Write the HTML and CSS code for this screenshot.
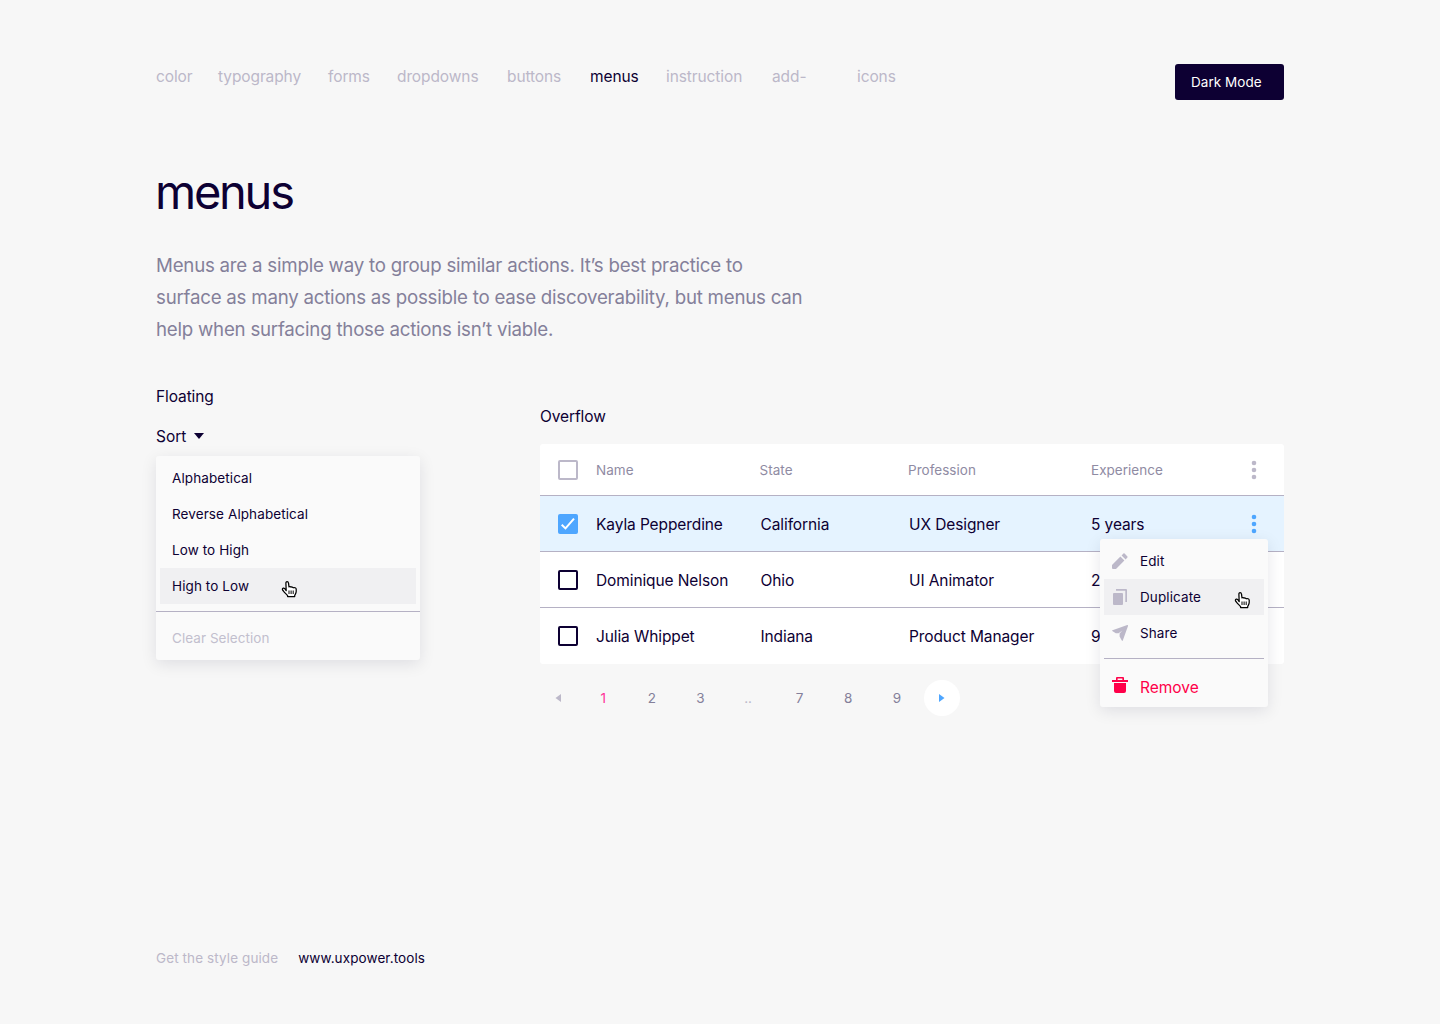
FILE: index.html
```html
<!DOCTYPE html>
<html lang="en">
<head>
<meta charset="utf-8">
<title>menus</title>
<link rel="stylesheet" href="styles.css">
</head>
<body>
<svg class="symbols" aria-hidden="true">
  <symbol id="hand" viewBox="0 0 17 18">
    <path d="M5.2 10.7 4.9 3.4C4.8 2.3 5.3 1.6 6.1 1.6S7.4 2.3 7.5 3.2L8 6.9C8.5 6.4 9.6 6.4 10.1 7.2 10.8 6.8 11.8 7 12.2 7.8 13.3 7.3 15.2 7.8 15.2 9.2V11.6C15.2 13.3 14.2 14.2 13.7 15.4V16.5H6.6V15.6C5.6 14.4 4.6 13.2 3.3 12.2L1.6 10C1 9 1.7 7.9 2.8 8.2 3.9 8.5 4.5 9.6 5.2 10.7Z" fill="#fff" stroke="#000" stroke-width="1.25" stroke-linejoin="round"/>
    <path d="M8 10.5V14M10.1 10.5V14M12.2 10.5V14" stroke="#000" stroke-width="1"/>
  </symbol>
  <symbol id="dots" viewBox="0 0 6 20">
    <circle cx="3" cy="3" r="2.3"/><circle cx="3" cy="10" r="2.3"/><circle cx="3" cy="17" r="2.3"/>
  </symbol>
</svg>
<div class="page">
  <header class="topbar">
    <nav class="nav">
      <a>color</a><a>typography</a><a>forms</a><a>dropdowns</a><a>buttons</a><a class="current">menus</a><a>instruction</a><a>add-</a><a>icons</a>
    </nav>
    <button class="mode"><span>Dark Mode</span></button>
  </header>
  <h1>menus</h1>
  <p class="intro">Menus are a simple way to group similar actions. It’s best practice to<br>surface as many actions as possible to ease discoverability, but menus can<br>help when surfacing those actions isn’t viable.</p>
  <main class="examples">
    <section class="floating">
      <h2>Floating</h2>
      <div class="sort"><span>Sort</span><svg width="10" height="6" viewBox="0 0 10 6"><path d="M0 0H10L5 6Z"/></svg></div>
      <div class="menu sort-menu">
        <ul>
          <li><span>Alphabetical</span></li>
          <li><span>Reverse Alphabetical</span></li>
          <li><span>Low to High</span></li>
          <li class="hover"><span>High to Low</span><svg class="hand" width="17" height="18"><use href="#hand"/></svg></li>
        </ul>
        <div class="clear"><span>Clear Selection</span></div>
      </div>
    </section>
    <section class="overflow">
      <h2>Overflow</h2>
      <div class="table">
        <div class="row head"><i class="box"></i><span>Name</span><span>State</span><span>Profession</span><span>Experience</span><svg class="dots" width="6" height="20"><use href="#dots"/></svg></div>
        <div class="row selected"><i class="box"><svg width="20" height="20" viewBox="0 0 20 20"><path d="M3.7 10.7 7.5 14.4 16 4.6" fill="none" stroke="#fff" stroke-width="2"/></svg></i><span>Kayla Pepperdine</span><span>California</span><span>UX Designer</span><span>5 years</span><svg class="dots" width="6" height="20"><use href="#dots"/></svg></div>
        <div class="row"><i class="box"></i><span>Dominique Nelson</span><span>Ohio</span><span>UI Animator</span><span>2</span></div>
        <div class="row"><i class="box"></i><span>Julia Whippet</span><span>Indiana</span><span>Product Manager</span><span>9</span></div>
        <div class="menu actions">
          <ul>
            <li><svg width="16" height="16" viewBox="0 0 16 16"><path d="M0 12 8.4 3.6 12.4 7.6 4 16H1Q0 16 0 15ZM9.6 2.4 11.4.6Q12 0 12.6.6L15.4 3.4Q16 4 15.4 4.6L13.6 6.4Z"/></svg><span>Edit</span></li>
            <li class="hover"><svg width="16" height="16" viewBox="0 0 16 16"><path d="M2 4H10Q11 4 11 5V15Q11 16 10 16H2Q1 16 1 15V5Q1 4 2 4ZM4 0H14Q15 0 15 1V13H13.3V1.7H4Z"/></svg><span>Duplicate</span><svg class="hand" width="17" height="18"><use href="#hand"/></svg></li>
            <li><svg width="16" height="16" viewBox="0 0 16 16"><path d="M15.3 0Q16.2 0 16 .9L10.8 15.5Q10.4 16.3 9.8 15.5L7.6 11.6V8.6L10.4 5.5 6.6 8.2H3.8L.3 6.1Q-.3 5.6.5 5.2Z"/></svg><span>Share</span></li>
          </ul>
          <div class="remove"><svg width="16" height="16" viewBox="0 0 16 16"><path fill-rule="evenodd" d="M4 3V1Q4 0 5 0H11Q12 0 12 1V3H16V5H0V3ZM5.6 1.6V3H10.4V1.6ZM2 6H14V14Q14 16 12 16H4Q2 16 2 14Z"/></svg><span>Remove</span></div>
        </div>
      </div>
      <div class="pager">
        <svg width="6" height="8" viewBox="0 0 6 8"><path d="M6 0V8L.5 4Z" fill="#bcb8c9"/></svg>
        <span class="active">1</span><span>2</span><span>3</span><span class="gap">..</span><span>7</span><span>8</span><span>9</span>
        <b class="next"><svg width="6" height="8" viewBox="0 0 6 8"><path d="M0 0V8L5.5 4Z" fill="#4ea6ff"/></svg></b>
      </div>
    </section>
  </main>
  <footer><span>Get the style guide</span><a>www.uxpower.tools</a></footer>
</div>
</body>
</html>
```
FILE: styles.css
```css
* { box-sizing: border-box; }
body { margin: 0; background: #f7f7f7; color: #0d0033; font: 15.5px/24px Inter, "Liberation Sans", sans-serif; letter-spacing: -.1px; }
.symbols { display: none; }
.page { display: flex; flex-direction: column; height: 1024px; padding: 64px 156px 54px; }
.topbar { display: flex; justify-content: space-between; height: 36px; }
.nav { display: grid; grid-template-columns: 62px 110px 69px 110px 83px 76px 106px 85px auto; padding-top: 1px; color: #bcb8c9; white-space: nowrap; }
.nav .current { color: #0d0033; }
.mode { width: 109px; height: 36px; padding: 0 16px; border: 0; border-radius: 3px; background: #0d0033; color: #fff; font: 13.5px/36px Inter, sans-serif; letter-spacing: .05px; text-align: left; }
h1 { margin: 60px 0 0 -1px; font-size: 47px; line-height: 64px; font-weight: 400; letter-spacing: -2.25px; }
.intro { margin: 26px 0 0; color: #84809a; font-size: 18.7px; line-height: 32px; letter-spacing: -.23px; white-space: nowrap; }
.examples { display: grid; grid-template-columns: 264px 744px; column-gap: 120px; margin-top: 38px; }
h2 { margin: 0; padding-top: 1px; height: 24px; font-size: inherit; font-weight: 400; line-height: 24px; }
.sort { display: flex; align-items: center; gap: 8px; height: 24px; margin: 16px 0 8px; letter-spacing: 0; }
.sort span { padding-top: 2px; }
.sort svg { fill: #0d0033; }
.menu { border-radius: 3px; background: #fafafa; box-shadow: 0 4px 16px rgba(13, 0, 51, .1); font-size: 13.5px; letter-spacing: .1px; }
.menu ul { list-style: none; margin: 0; padding: 4px; }
.menu li { position: relative; display: flex; align-items: center; height: 36px; padding: 0 12px; }
.menu .hover { background: #f0f0f2; }
.hand { position: absolute; }
.sort-menu { height: 204px; }
.sort-menu .hand { left: 121px; top: 12px; }
.clear { height: 49px; margin-top: 3px; padding: 14px 16px; border-top: 1px solid #b5b1c4; color: #c2bfce; letter-spacing: .05px; }
.overflow { padding-top: 20px; }
.table { position: relative; margin-top: 16px; border-radius: 3px; background: #fff; }
.row { display: grid; grid-template-columns: 38px 164.5px 148.5px 182px 160px 6px; align-items: center; height: 56px; padding: 0 18px; border-bottom: 1px solid #b5b1c4; }
.row:nth-child(4) { border: 0; }
.row span { padding-top: 2px; }
.head { grid-template-columns: 38px 163.5px 148.5px 183px 160px 6px; height: 52px; color: #8f8ba3; font-size: 13.5px; letter-spacing: .03px; }
.head span { padding-top: 0; }
.selected { background: #e5f3ff; }
.box { display: block; width: 20px; height: 20px; border: 2px solid #0d0033; border-radius: 2px; }
.head .box { border-color: #bcb8c9; }
.selected .box { border: 0; background: #4ea6ff; }
.box svg { display: block; }
.dots { fill: #bcb8c9; }
.selected .dots { fill: #4ea6ff; }
.actions { position: absolute; left: 560px; top: 95px; width: 168px; height: 168px; }
.actions li { padding: 0 8px; gap: 12px; fill: #bcb8c9; }
.actions .hand { left: 130px; top: 12px; }
.remove { display: flex; align-items: center; gap: 12px; height: 48px; margin: 3px 4px 0; padding: 8px 8px 0; border-top: 1px solid #b5b1c4; color: #ff0049; fill: #ff0049; font-size: 15.5px; letter-spacing: 0; }
.remove svg { margin-top: -4px; }
.remove span { padding-top: 2px; }
.pager { display: flex; align-items: center; height: 36px; margin-top: 16px; padding-left: 15px; color: #84809a; font-size: 13.5px; letter-spacing: 0; }
.pager svg { flex: none; }
.pager span { width: 48.6px; text-align: center; }
.pager .active { margin-left: 18px; color: #ff3399; }
.pager .gap { width: 50.6px; padding-right: 4px; color: #bcb8c9; }
.next { display: flex; align-items: center; justify-content: center; width: 36px; height: 36px; margin-left: 3px; border-radius: 50%; background: #fff; }
footer { display: flex; gap: 20px; margin-top: auto; font-size: 13.5px; line-height: 24px; letter-spacing: .1px; color: #bcb8c9; }
footer a { color: #0d0033; }
```
